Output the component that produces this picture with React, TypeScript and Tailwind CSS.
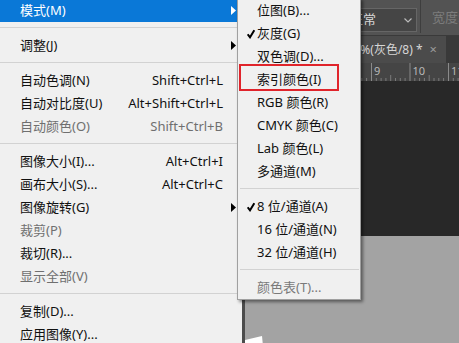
import React from "react";

type Item =
  | { sep: true }
  | {
      sep?: false;
      label: string;
      shortcut?: string;
      arrow?: boolean;
      disabled?: boolean;
      active?: boolean;
      checked?: boolean;
    };

const mainItems: Item[] = [
  { label: "模式(M)", arrow: true, active: true },
  { sep: true },
  { label: "调整(J)", arrow: true },
  { sep: true },
  { label: "自动色调(N)", shortcut: "Shift+Ctrl+L" },
  { label: "自动对比度(U)", shortcut: "Alt+Shift+Ctrl+L" },
  { label: "自动颜色(O)", shortcut: "Shift+Ctrl+B", disabled: true },
  { sep: true },
  { label: "图像大小(I)...", shortcut: "Alt+Ctrl+I" },
  { label: "画布大小(S)...", shortcut: "Alt+Ctrl+C" },
  { label: "图像旋转(G)", arrow: true },
  { label: "裁剪(P)", disabled: true },
  { label: "裁切(R)..." },
  { label: "显示全部(V)", disabled: true },
  { sep: true },
  { label: "复制(D)..." },
  { label: "应用图像(Y)..." },
];

const modeItems: Item[] = [
  { label: "位图(B)..." },
  { label: "灰度(G)", checked: true },
  { label: "双色调(D)..." },
  { label: "索引颜色(I)" },
  { label: "RGB 颜色(R)" },
  { label: "CMYK 颜色(C)" },
  { label: "Lab 颜色(L)" },
  { label: "多通道(M)" },
  { sep: true },
  { label: "8 位/通道(A)", checked: true },
  { label: "16 位/通道(N)" },
  { label: "32 位/通道(H)" },
  { sep: true },
  { label: "颜色表(T)...", disabled: true },
];

function Arrow({ white }: { white?: boolean }) {
  return (
    <svg
      width="5"
      height="9"
      viewBox="0 0 5 9"
      className="absolute right-[6px] top-[7px]"
    >
      <path d="M0 0L5 4.5L0 9Z" fill={white ? "#fff" : "#000"} />
    </svg>
  );
}

function Check() {
  return (
    <svg
      width="8"
      height="10"
      viewBox="0 0 8 10"
      className="absolute left-[9px] top-[7px]"
    >
      <path
        d="M0.7 5.3L3 8.3L7.3 1.2"
        fill="none"
        stroke="#000"
        strokeWidth="2"
      />
    </svg>
  );
}

function MainMenu() {
  return (
    <div className="w-[242px] shrink-0 bg-[#f0f0f0]">
      <div className="-mt-[1px] flex flex-col">
        {mainItems.map((it, i) =>
          it.sep ? (
            <div key={i} className="h-[12px] pt-[5px]">
              <div className="h-px bg-[#d2d2d2]" />
            </div>
          ) : (
            <div
              key={i}
              className={
                "relative flex h-[23px] items-center pl-[20px] pr-[19px] " +
                (it.active
                  ? "bg-[#0a78d7] text-white"
                  : it.disabled
                    ? "text-[#6f6f6f]"
                    : "text-[#111]")
              }
            >
              <span className="flex-1">{it.label}</span>
              {it.shortcut && <span>{it.shortcut}</span>}
              {it.arrow && <Arrow white={it.active} />}
            </div>
          )
        )}
      </div>
    </div>
  );
}

function ModeMenu() {
  return (
    <div className="absolute left-[237px] top-[-2px] w-[124px] border border-[#a0a0a0] bg-[#f0f0f0] shadow-[2px_2px_3px_rgba(0,0,0,0.45)]">
      {modeItems.map((it, i) =>
        it.sep ? (
          <div key={i} className="h-[12px] pl-[2px] pr-[1px] pt-[5px]">
            <div className="h-px bg-[#d2d2d2]" />
          </div>
        ) : (
          <div
            key={i}
            className={
              "relative flex h-[23px] items-center pl-[19px] " +
              (it.disabled ? "text-[#7a7a7a]" : "text-[#111]")
            }
          >
            {it.checked && <Check />}
            <span>{it.label}</span>
          </div>
        )
      )}
    </div>
  );
}

function Ruler() {
  const majors = [11, 49.5, 88, 126.5, 165, 203.5];
  const labels = ["6", "7", "8", "9", "10", "11"];
  return (
    <svg width="214" height="18" className="block">
      <rect width="214" height="18" fill="#454545" />
      {majors.map((x, i) => (
        <g key={i}>
          <line x1={x} y1="0" x2={x} y2="18" stroke="#8a8a8a" strokeWidth="1" />
          {[1, 2, 3, 4, 5, 6, 7].map((k) => (
            <line
              key={k}
              x1={x + k * 4.8}
              y1={k === 4 ? 12 : 15}
              x2={x + k * 4.8}
              y2="18"
              stroke="#7a7a7a"
              strokeWidth="1"
            />
          ))}
          <text
            x={x + 2.5}
            y="12"
            fontSize="11"
            fill="#b8b8b8"
            fontFamily="Noto Sans, sans-serif"
          >
            {labels[i]}
          </text>
        </g>
      ))}
    </svg>
  );
}

function Workspace() {
  return (
    <div className="flex flex-1 flex-col border-l-[3px] border-[#4c4c4c]">
      {/* options bar */}
      <div className="flex h-[35px] items-start bg-[#535353] pl-[45px]">
        <div className="mt-[8px] flex h-[24px] w-[127px] items-center justify-between border border-[#666] bg-[#454545] pl-[59px] pr-[4px] text-[#d8d8d8]">
          <span>正常</span>
          <svg width="8" height="5" viewBox="0 0 8 5">
            <path d="M0.5 0.5L4 4L7.5 0.5" fill="none" stroke="#bbb" strokeWidth="1.2" />
          </svg>
        </div>
        <div className="ml-[3px] h-[33px] w-px bg-[#3e3e3e]" />
        <span className="ml-[11px] mt-[8px] whitespace-nowrap text-[#7c7c7c]">宽度:</span>
      </div>
      {/* tabs */}
      <div className="flex h-[28px] border-t border-[#3a3a3a] bg-[#393939]">
        <div className="flex w-[201px] items-center justify-end overflow-hidden bg-[#4b4b4b] pr-[9px] text-[12px] text-[#d6d6d6]">
          <span className="whitespace-nowrap">未标题-1 @ 66.7%(灰色/8) *</span>
          <span className="ml-[7px] text-[13px] text-[#9a9a9a]">×</span>
        </div>
      </div>
      {/* ruler */}
      <Ruler />
      <div className="h-[155px] bg-[#282828]" />
      <div className="relative flex-1 bg-[#a3a3a3]">
        <svg width="20" height="10" className="absolute left-0 top-[100px]">
          <path d="M0 4L17 0L18 10L0 10Z" fill="#fff" />
        </svg>
      </div>
    </div>
  );
}

export default function App() {
  return (
    <div className="relative flex h-[343px] w-[459px] overflow-hidden font-['Noto_Sans','Noto_Sans_CJK_SC',sans-serif] text-[13px]">
      <MainMenu />
      <Workspace />
      <ModeMenu />
      {/* annotation box */}
      <div className="absolute left-[239px] top-[64px] h-[27px] w-[100px] border-[2.5px] border-[#e0242b]" />
    </div>
  );
}
